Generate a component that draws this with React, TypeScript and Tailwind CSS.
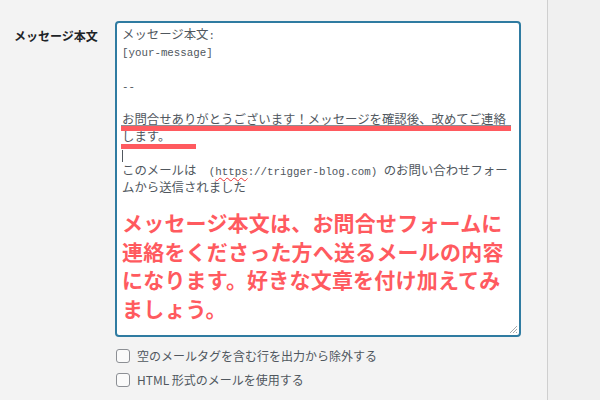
const mono = "font-['Liberation_Mono','Noto_Sans_CJK_JP',monospace]";
const jp = "font-['Noto_Sans_CJK_JP','Noto_Sans',sans-serif]";

function L({ children }: { children: React.ReactNode }) {
  return <span className="text-[10.8px]">{children}</span>;
}

function Check({ label }: { label: string }) {
  return (
    <label className="flex items-center h-[24px] pl-[1px]">
      <span className="w-[14px] h-[14px] rounded-[3px] border border-[#8c8f94] bg-[#fafafa] shrink-0" />
      <span className={`ml-[7px] text-[12px] text-[#50575e] ${jp}`}>{label}</span>
    </label>
  );
}

export default function App() {
  return (
    <div className="w-[600px] h-[400px] flex bg-[#f3f3f3] overflow-hidden">
      <div className="w-[547px] pt-[21px] flex">
        <div className={`w-[115px] pl-[14px] pt-[6px] text-[12px] leading-[17px] font-bold text-[#1d2327] ${jp}`}>
          メッセージ本文
        </div>

        <div className="w-[406px]">
          <div className="relative h-[316px] border-2 border-[#2f7ba1] rounded-[4px] bg-white pl-[5px] pt-[5px]">
            <div className={`${mono} text-[12.4px] leading-[17px] text-[#50575e] whitespace-pre`}>
              <div>メッセージ本文<L>:</L></div>
              <div><L>[your-message]</L></div>
              <div>&nbsp;</div>
              <div><L>--</L></div>
              <div>&nbsp;</div>
              <div>お問合せありがとうございます！メッセージを確認後、改めてご連絡</div>
              <div>します。</div>
              <div className="flex items-center h-[17px]">
                <span className="w-px h-[12px] bg-[#50575e]" />
              </div>
              <div>
                このメールは　<L>(<span className="underline decoration-wavy decoration-[#e33] decoration-1 underline-offset-2">https</span>://trigger-blog.com) </L>のお問い合わせフォー
              </div>
              <div>ムから送信されました</div>
            </div>

            <p className={`mt-[10px] text-[21px] leading-[28.5px] font-bold tracking-[0.2px] text-[#ff5a5f] ${jp}`}>
              メッセージ本文は、お問合せフォームに<br />
              連絡をくださった方へ送るメールの内容<br />
              になります。好きな文章を付け加えてみ<br />
              ましょう。
            </p>

            {/* highlight bars */}
            <div className="absolute left-[4px] top-[102px] w-[390px] h-px bg-[#8c8f94]" />
            <div className="absolute left-[4px] top-[103px] w-[390px] h-[5px] bg-[#ff5a5f]" />
            <div className="absolute left-[4px] top-[121px] w-[75px] h-[5px] bg-[#ff5a5f]" />

            {/* resize grip */}
            <svg className="absolute right-[1px] bottom-[1px]" width="9" height="9" viewBox="0 0 9 9">
              <path d="M8 1 L1 8 M8 4 L4 8 M8 7 L7 8" stroke="#a7aaad" strokeWidth="1" />
            </svg>
          </div>

          <div className="mt-[7px]">
            <Check label="空のメールタグを含む行を出力から除外する" />
            <Check label="HTML 形式のメールを使用する" />
          </div>
        </div>
      </div>
      <div className="flex-1 border-l border-[#cfcfcf] bg-[#f0f0f0]" />
    </div>
  );
}
